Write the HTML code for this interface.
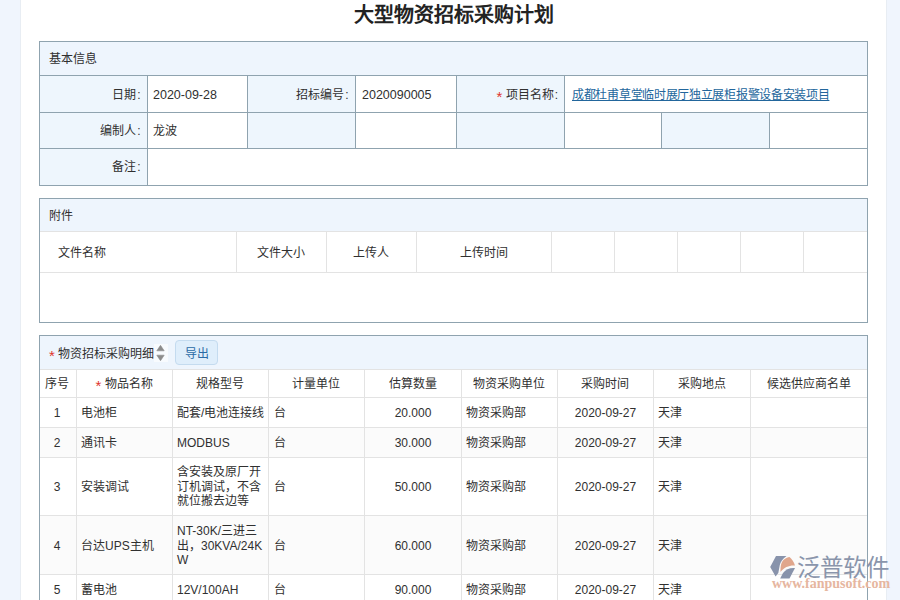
<!DOCTYPE html>
<html lang="zh-CN"><head><meta charset="utf-8">
<style>
*{box-sizing:border-box;margin:0;padding:0}
html,body{width:900px;height:600px;overflow:hidden;background:#fff;font-family:"Liberation Sans",sans-serif;font-size:12px;color:#303030;position:relative}
.r{position:absolute}
.t{position:absolute;white-space:nowrap;line-height:20px;height:20px}
.c{text-align:center}
.col{margin-left:1px}
.en{font-size:12.5px}
.ml{position:absolute;line-height:14.5px;white-space:nowrap}
.title{position:absolute;left:0;top:1px;width:908px;text-align:center;font-size:20px;font-weight:bold;line-height:29px;color:#222}
.red{color:#e0342c;font-size:15px;position:relative;top:2.5px;line-height:10px}
.link{color:#22669c;text-decoration:underline;letter-spacing:-0.3px}
.btn{background:#dfeefb;border:1px solid #c4dbef;border-radius:4px;color:#2a6aa5;text-align:center;line-height:27px;font-size:12px}
.wm{position:absolute;width:130px;height:45px;opacity:0.95}
.wmt{font-size:23.5px;font-weight:500;color:#8a95ab;line-height:28px;white-space:nowrap}
.wmu{font-family:"Liberation Serif",serif;font-size:14px;font-weight:bold;color:#e6b6a0;letter-spacing:0px;line-height:14px;white-space:nowrap}
</style></head><body>
<div class="r" style="left:0px;top:0px;width:20px;height:600px;background:#f0f5fd;"></div>
<div class="r" style="left:20px;top:0px;width:1px;height:600px;background:#e8edf3;"></div>
<div class="r" style="left:887px;top:0px;width:13px;height:600px;background:#f0f5fd;"></div>
<div class="r" style="left:886px;top:0px;width:1px;height:600px;background:#e8edf3;"></div>
<div class="title">大型物资招标采购计划</div>
<div class="r" style="left:40px;top:42px;width:827px;height:33px;background:#eef5fd;"></div>
<div class="r" style="left:40px;top:76px;width:107px;height:109px;background:#eef6fd;"></div>
<div class="r" style="left:248px;top:76px;width:107px;height:72px;background:#eef6fd;"></div>
<div class="r" style="left:457px;top:76px;width:107px;height:72px;background:#eef6fd;"></div>
<div class="r" style="left:662px;top:113px;width:107px;height:35px;background:#eef6fd;"></div>
<div class="r" style="left:39px;top:41px;width:829px;height:1px;background:#8fa3af;"></div>
<div class="r" style="left:39px;top:185px;width:829px;height:1px;background:#8fa3af;"></div>
<div class="r" style="left:39px;top:41px;width:1px;height:145px;background:#8fa3af;"></div>
<div class="r" style="left:867px;top:41px;width:1px;height:145px;background:#8fa3af;"></div>
<div class="r" style="left:39px;top:75px;width:829px;height:1px;background:#8fa3af;"></div>
<div class="r" style="left:39px;top:112px;width:829px;height:1px;background:#8fa3af;"></div>
<div class="r" style="left:39px;top:148px;width:829px;height:1px;background:#8fa3af;"></div>
<div class="r" style="left:147px;top:75px;width:1px;height:111px;background:#8fa3af;"></div>
<div class="r" style="left:247px;top:75px;width:1px;height:74px;background:#8fa3af;"></div>
<div class="r" style="left:355px;top:75px;width:1px;height:74px;background:#8fa3af;"></div>
<div class="r" style="left:456px;top:75px;width:1px;height:74px;background:#8fa3af;"></div>
<div class="r" style="left:564px;top:75px;width:1px;height:74px;background:#8fa3af;"></div>
<div class="r" style="left:661px;top:112px;width:1px;height:37px;background:#8fa3af;"></div>
<div class="r" style="left:769px;top:112px;width:1px;height:37px;background:#8fa3af;"></div>
<div class="t " style="left:49px;top:49px;">基本信息</div>
<div class="t " style="right:759.5px;top:85px;">日期<span class="col">:</span></div>
<div class="t en" style="left:153px;top:85px;">2020-09-28</div>
<div class="t " style="right:551.5px;top:85px;">招标编号<span class="col">:</span></div>
<div class="t en" style="left:362px;top:85px;">2020090005</div>
<div class="t " style="right:342px;top:85px;"><span class="red">*</span> 项目名称<span class="col">:</span></div>
<div class="t link" style="left:572px;top:85px;">成都杜甫草堂临时展厅独立展柜报警设备安装项目</div>
<div class="t " style="right:759.5px;top:121px;">编制人<span class="col">:</span></div>
<div class="t " style="left:153px;top:121px;">龙波</div>
<div class="t " style="right:759.5px;top:157px;">备注<span class="col">:</span></div>
<div class="r" style="left:40px;top:199px;width:827px;height:32px;background:#eef5fd;"></div>
<div class="r" style="left:39px;top:198px;width:829px;height:1px;background:#8fa3af;"></div>
<div class="r" style="left:39px;top:322px;width:829px;height:1px;background:#8fa3af;"></div>
<div class="r" style="left:39px;top:198px;width:1px;height:125px;background:#8fa3af;"></div>
<div class="r" style="left:867px;top:198px;width:1px;height:125px;background:#8fa3af;"></div>
<div class="r" style="left:40px;top:231px;width:827px;height:1px;background:#e3e3e3;"></div>
<div class="r" style="left:40px;top:272px;width:827px;height:1px;background:#e3e3e3;"></div>
<div class="r" style="left:236px;top:232px;width:1px;height:40px;background:#e3e3e3;"></div>
<div class="r" style="left:326px;top:232px;width:1px;height:40px;background:#e3e3e3;"></div>
<div class="r" style="left:416px;top:232px;width:1px;height:40px;background:#e3e3e3;"></div>
<div class="r" style="left:551px;top:232px;width:1px;height:40px;background:#e3e3e3;"></div>
<div class="r" style="left:614px;top:232px;width:1px;height:40px;background:#e3e3e3;"></div>
<div class="r" style="left:677px;top:232px;width:1px;height:40px;background:#e3e3e3;"></div>
<div class="r" style="left:740px;top:232px;width:1px;height:40px;background:#e3e3e3;"></div>
<div class="r" style="left:803px;top:232px;width:1px;height:40px;background:#e3e3e3;"></div>
<div class="t " style="left:49px;top:206px;">附件</div>
<div class="t " style="left:58px;top:243px;">文件名称</div>
<div class="t c " style="left:181px;top:243px;width:200px;">文件大小</div>
<div class="t c " style="left:271px;top:243px;width:200px;">上传人</div>
<div class="t c " style="left:383.5px;top:243px;width:200px;">上传时间</div>
<div class="r" style="left:40px;top:336px;width:827px;height:33px;background:#eef5fd;"></div>
<div class="r" style="left:39px;top:335px;width:1px;height:265px;background:#8fa3af;"></div>
<div class="r" style="left:867px;top:335px;width:1px;height:265px;background:#8fa3af;"></div>
<div class="r" style="left:39px;top:335px;width:829px;height:1px;background:#8fa3af;"></div>
<div class="r" style="left:40px;top:369px;width:827px;height:1px;background:#e3e3e3;"></div>
<div class="r" style="left:40px;top:428px;width:827px;height:29px;background:#fbfbfb;"></div>
<div class="r" style="left:40px;top:516px;width:827px;height:58px;background:#fbfbfb;"></div>
<div class="r" style="left:40px;top:397px;width:827px;height:1px;background:#e3e3e3;"></div>
<div class="r" style="left:40px;top:427px;width:827px;height:1px;background:#e3e3e3;"></div>
<div class="r" style="left:40px;top:457px;width:827px;height:1px;background:#e3e3e3;"></div>
<div class="r" style="left:40px;top:515px;width:827px;height:1px;background:#e3e3e3;"></div>
<div class="r" style="left:40px;top:574px;width:827px;height:1px;background:#e3e3e3;"></div>
<div class="r" style="left:76px;top:370px;width:1px;height:230px;background:#e3e3e3;"></div>
<div class="r" style="left:172px;top:370px;width:1px;height:230px;background:#e3e3e3;"></div>
<div class="r" style="left:268px;top:370px;width:1px;height:230px;background:#e3e3e3;"></div>
<div class="r" style="left:364px;top:370px;width:1px;height:230px;background:#e3e3e3;"></div>
<div class="r" style="left:461px;top:370px;width:1px;height:230px;background:#e3e3e3;"></div>
<div class="r" style="left:557px;top:370px;width:1px;height:230px;background:#e3e3e3;"></div>
<div class="r" style="left:653px;top:370px;width:1px;height:230px;background:#e3e3e3;"></div>
<div class="r" style="left:750px;top:370px;width:1px;height:230px;background:#e3e3e3;"></div>
<div class="t " style="left:49px;top:344px;"><span class="red">*</span> 物资招标采购明细</div>
<svg class="r" style="left:154px;top:344px" width="14" height="18" viewBox="0 0 14 18"><rect x="0" y="0" width="14" height="18" fill="#f8fbfe"/><path d="M2.8 6.8 L6.5 1.3 L10.2 6.8 Z" fill="#8c8c8c" stroke="#8c8c8c" stroke-width="0.6" stroke-linejoin="round"/><path d="M2.8 11.2 L6.5 16.7 L10.2 11.2 Z" fill="#8c8c8c" stroke="#8c8c8c" stroke-width="0.6" stroke-linejoin="round"/></svg>
<div class="r btn" style="left:175px;top:340px;width:43px;height:25px">导出</div>
<div class="t c " style="left:-43.5px;top:374px;width:200px;">序号</div>
<div class="t c " style="left:24px;top:374px;width:200px;"><span class="red">*</span> 物品名称</div>
<div class="t c " style="left:120px;top:374px;width:200px;">规格型号</div>
<div class="t c " style="left:216px;top:374px;width:200px;">计量单位</div>
<div class="t c " style="left:312.5px;top:374px;width:200px;">估算数量</div>
<div class="t c " style="left:409px;top:374px;width:200px;">物资采购单位</div>
<div class="t c " style="left:505px;top:374px;width:200px;">采购时间</div>
<div class="t c " style="left:601.5px;top:374px;width:200px;">采购地点</div>
<div class="t c " style="left:708.5px;top:374px;width:200px;">候选供应商名单</div>
<div class="t c " style="left:-43px;top:403px;width:200px;">1</div>
<div class="t " style="left:81px;top:403px;">电池柜</div>
<div class="t " style="left:177px;top:403px;">配套/电池连接线</div>
<div class="t " style="left:274px;top:403px;">台</div>
<div class="t c " style="left:313px;top:403px;width:200px;">20.000</div>
<div class="t " style="left:466px;top:403px;">物资采购部</div>
<div class="t c " style="left:505.5px;top:403px;width:200px;">2020-09-27</div>
<div class="t " style="left:658px;top:403px;">天津</div>
<div class="t c " style="left:-43px;top:433px;width:200px;">2</div>
<div class="t " style="left:81px;top:433px;">通讯卡</div>
<div class="t " style="left:177px;top:433px;">MODBUS</div>
<div class="t " style="left:274px;top:433px;">台</div>
<div class="t c " style="left:313px;top:433px;width:200px;">30.000</div>
<div class="t " style="left:466px;top:433px;">物资采购部</div>
<div class="t c " style="left:505.5px;top:433px;width:200px;">2020-09-27</div>
<div class="t " style="left:658px;top:433px;">天津</div>
<div class="t c " style="left:-43px;top:477px;width:200px;">3</div>
<div class="t " style="left:81px;top:477px;">安装调试</div>
<div class="ml" style="left:177px;top:465px">含安装及原厂开<br>订机调试，不含<br>就位搬去边等</div>
<div class="t " style="left:274px;top:477px;">台</div>
<div class="t c " style="left:313px;top:477px;width:200px;">50.000</div>
<div class="t " style="left:466px;top:477px;">物资采购部</div>
<div class="t c " style="left:505.5px;top:477px;width:200px;">2020-09-27</div>
<div class="t " style="left:658px;top:477px;">天津</div>
<div class="t c " style="left:-43px;top:536px;width:200px;">4</div>
<div class="t " style="left:81px;top:536px;">台达UPS主机</div>
<div class="ml" style="left:177px;top:524px">NT-30K/三进三<br>出，30KVA/24K<br>W</div>
<div class="t " style="left:274px;top:536px;">台</div>
<div class="t c " style="left:313px;top:536px;width:200px;">60.000</div>
<div class="t " style="left:466px;top:536px;">物资采购部</div>
<div class="t c " style="left:505.5px;top:536px;width:200px;">2020-09-27</div>
<div class="t " style="left:658px;top:536px;">天津</div>
<div class="t c " style="left:-43px;top:580px;width:200px;">5</div>
<div class="t " style="left:81px;top:580px;">蓄电池</div>
<div class="t " style="left:177px;top:580px;">12V/100AH</div>
<div class="t " style="left:274px;top:580px;">台</div>
<div class="t c " style="left:313px;top:580px;width:200px;">90.000</div>
<div class="t " style="left:466px;top:580px;">物资采购部</div>
<div class="t c " style="left:505.5px;top:580px;width:200px;">2020-09-27</div>
<div class="t " style="left:658px;top:580px;">天津</div>
<svg class="r" style="left:766px;top:552px" width="34" height="30" viewBox="0 0 34 30">
<path d="M10 4 L20.5 4 C16.5 7 14.5 10 13.8 13 L12.3 21 L9.6 24.6 L4.2 15 Z" fill="#8893ab"/>
<path d="M14.5 20 C14.5 14 15 10 18 7.5 C20 6 22 5 23.5 5 C26 7 28 10 29 13.5 C24 13 18 15 14.5 20 Z" fill="#e0a68c"/>
<path d="M14.2 26.4 L23.5 26.4 L29 16 C24 15.5 19.5 17.5 17 21 Z" fill="#8893ab"/>
</svg>
<div class="r wmt" style="left:797px;top:554px">泛普软件</div>
<div class="r wmu" style="left:772px;top:577px">www.fanpusoft.com</div>

</body></html>
